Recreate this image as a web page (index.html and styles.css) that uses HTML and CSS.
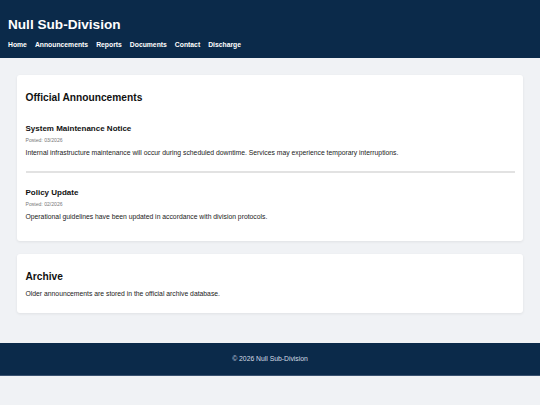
FILE: index.html
```html
<!DOCTYPE html>
<html lang="en">
<head>
<meta charset="utf-8">
<title>Null Sub-Division</title>
<link rel="stylesheet" href="styles.css">
</head>
<body>
<header class="site-header">
  <h1 class="site-title">Null Sub-Division</h1>
  <nav class="site-nav">
    <a href="#">Home</a>
    <a href="#">Announcements</a>
    <a href="#">Reports</a>
    <a href="#">Documents</a>
    <a href="#">Contact</a>
    <a href="#">Discharge</a>
  </nav>
</header>
<main class="content">
  <section class="card">
    <h2 class="card-title">Official Announcements</h2>
    <article class="item">
      <h3 class="item-title">System Maintenance Notice</h3>
      <p class="item-date">Posted: 03/2026</p>
      <p class="item-text">Internal infrastructure maintenance will occur during scheduled downtime. Services may experience temporary interruptions.</p>
    </article>
    <article class="item">
      <h3 class="item-title">Policy Update</h3>
      <p class="item-date">Posted: 02/2026</p>
      <p class="item-text">Operational guidelines have been updated in accordance with division protocols.</p>
    </article>
  </section>
  <section class="card">
    <h2 class="card-title card-title-tight">Archive</h2>
    <p class="item-text">Older announcements are stored in the official archive database.</p>
  </section>
</main>
<footer class="site-footer">
  <p class="footer-text">© 2026 Null Sub-Division</p>
</footer>
</body>
</html>
```
FILE: styles.css
```css
* { box-sizing: border-box; }
html, body {
  margin: 0;
  padding: 0;
  background: #f0f2f5;
  font-family: "Liberation Sans", Arial, sans-serif;
  font-size: 6.8px;
  color: #222;
}
.site-header {
  background: #0b2a4a;
  color: #fff;
  padding: 17px 8px 9px;
  height: 58px;
}
.site-title {
  margin: 0;
  font-size: 13.6px;
  line-height: 16px;
  font-weight: bold;
}
.site-nav {
  display: flex;
  gap: 8px;
  margin-top: 8px;
}
.site-nav a {
  color: #fff;
  text-decoration: none;
  font-weight: bold;
  font-size: 6.8px;
  line-height: 8px;
}
.content {
  padding: 17px 17px;
}
.card {
  background: #fff;
  border-radius: 3px;
  box-shadow: 0 1px 3px rgba(0, 0, 0, 0.07);
  padding: 17px 8.5px 15px;
  margin-bottom: 12.5px;
}
.card-title {
  margin: 0 0 20px;
  font-size: 10.2px;
  line-height: 12px;
  font-weight: bold;
  color: #111;
}
.card-title-tight { margin-bottom: 7.5px; }
.item {
  padding-bottom: 14px;
  border-bottom: 2px solid #e2e2e2;
  margin-bottom: 15px;
}
.item:last-child {
  border-bottom: none;
  padding-bottom: 5px;
  margin-bottom: 0;
}
.item-title {
  margin: 0;
  font-size: 8px;
  line-height: 9px;
  font-weight: bold;
  color: #111;
}
.item-date {
  margin: 3.5px 0 0;
  font-size: 5.1px;
  line-height: 6px;
  color: #777;
}
.item-text {
  margin: 6.5px 0 0;
  font-size: 6.8px;
  line-height: 8px;
  color: #222;
}
.card-title-tight + .item-text { margin-top: 0; }
.site-footer {
  background: #0b2a4a;
  height: 33px;
  display: flex;
  align-items: center;
  justify-content: center;
  border-bottom: 1px solid #3a5270;
}
.footer-text {
  margin: 0;
  font-size: 6.8px;
  line-height: 8px;
  color: #d5dce5;
}
```
